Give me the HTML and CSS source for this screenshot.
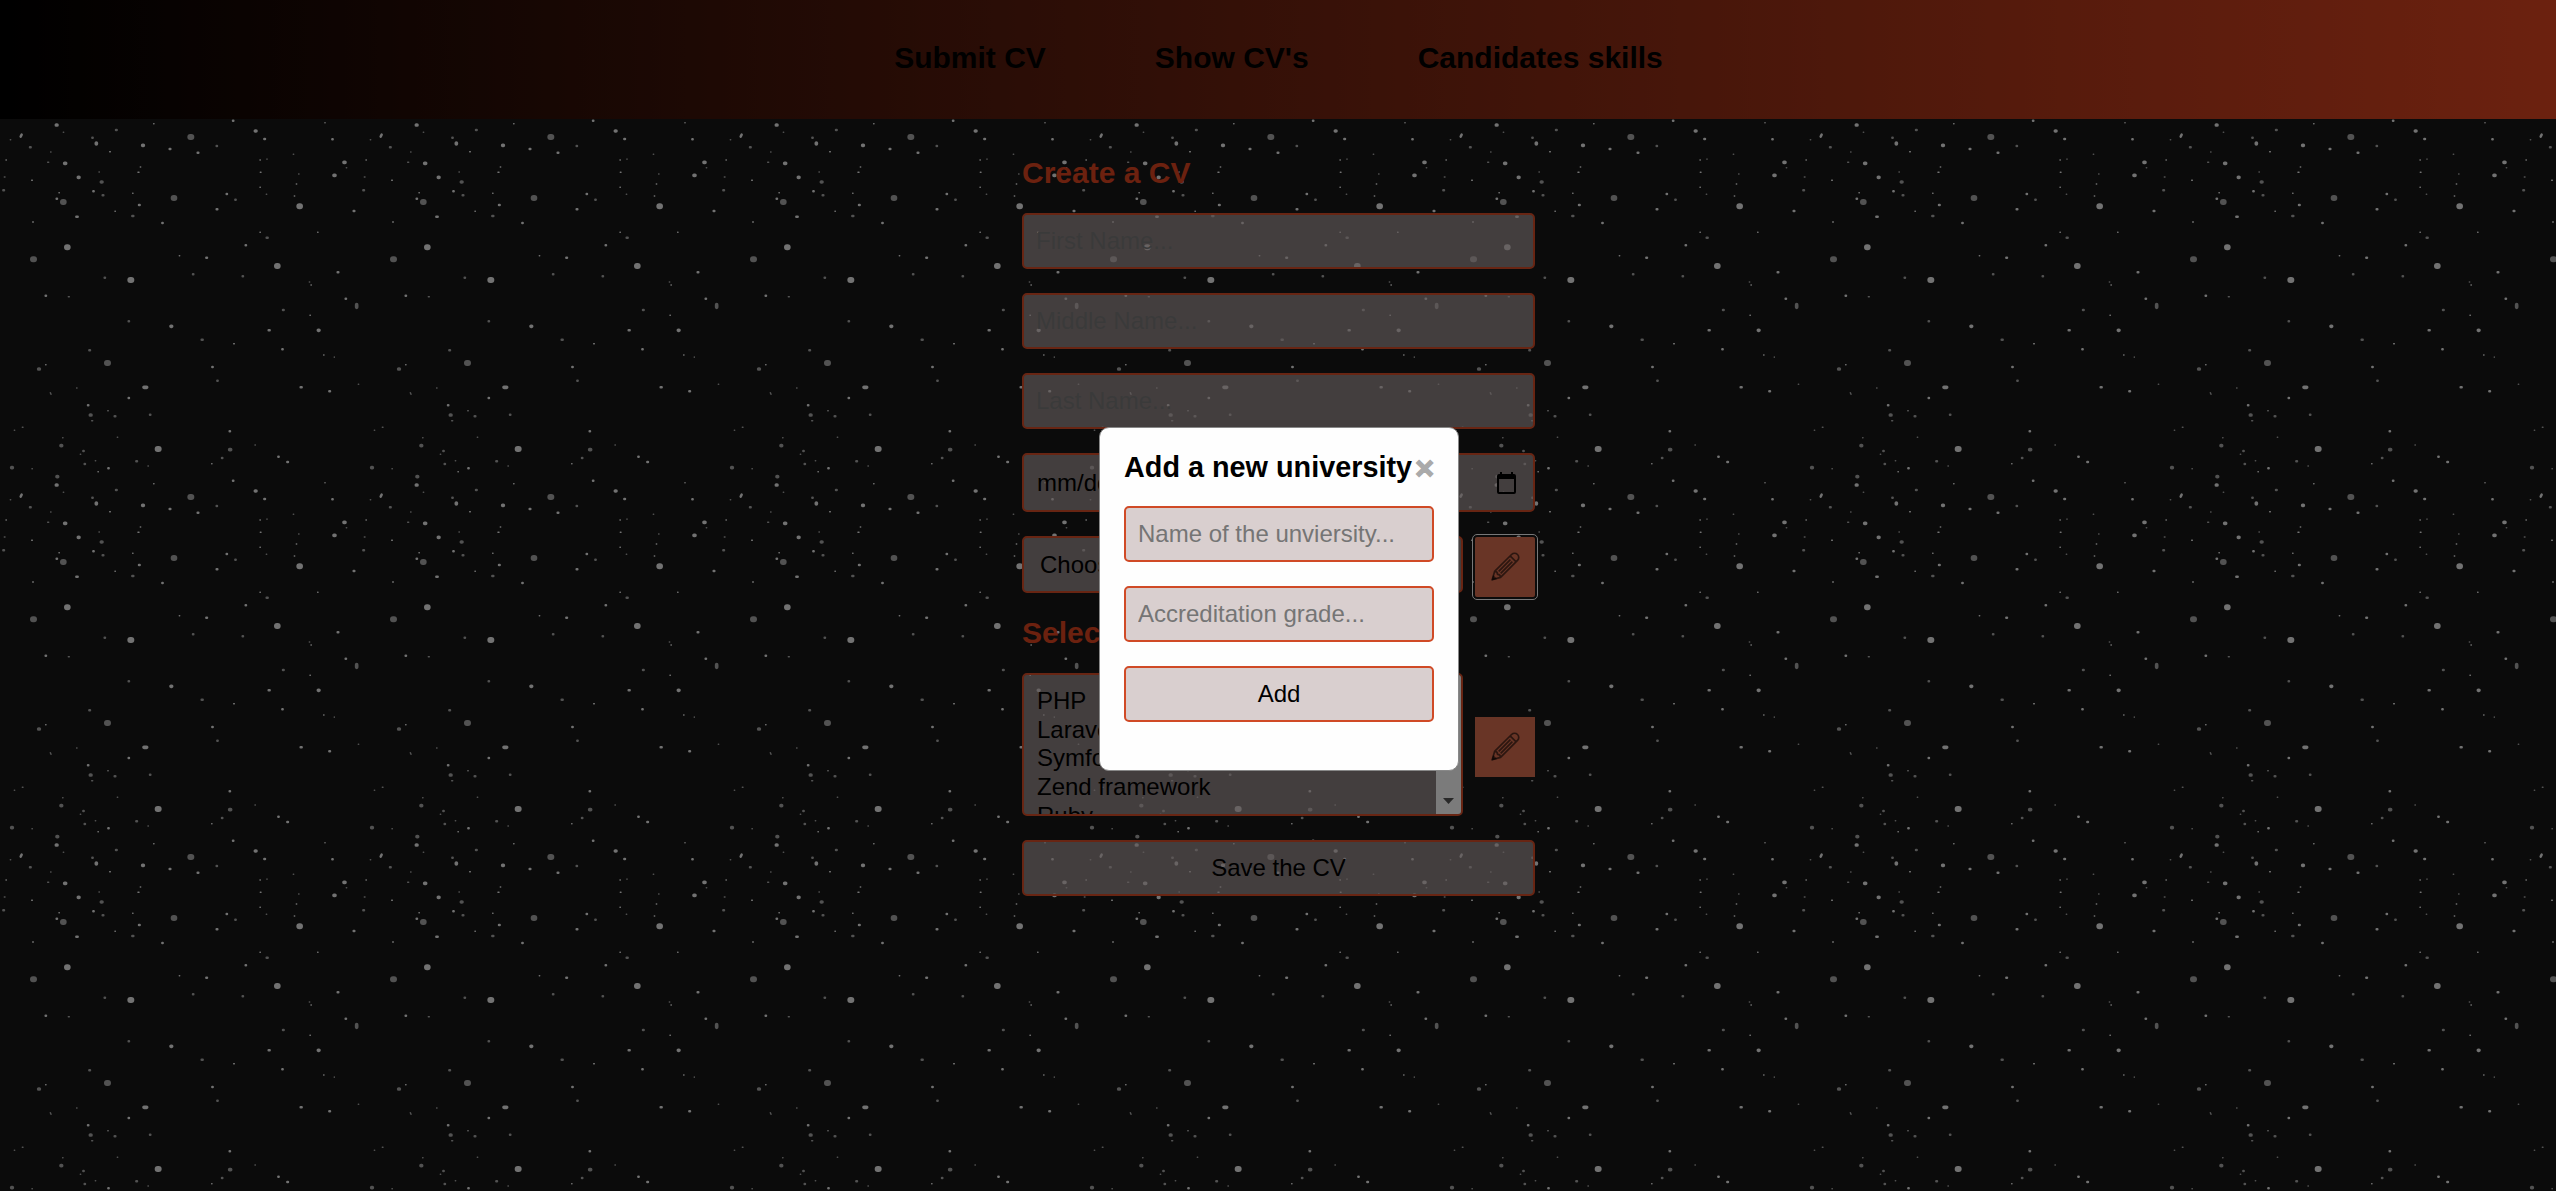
FILE: index.html
```html
<!DOCTYPE html>
<html lang="en">
<head>
<meta charset="utf-8">
<title>Create a CV</title>
<link rel="stylesheet" href="styles.css">
</head>
<body>
<svg class="sky" aria-hidden="true">
  <defs>
    <pattern id="stars" width="360" height="360" patternUnits="userSpaceOnUse">
      <g transform="scale(.33333)" fill="none" stroke-linecap="round">
        <path class="big bright" d="M898 619h2M201 742h2M391 840h3M831 798h2M473 267h3"/>
        <path class="big dim" d="M571 411h3M189 606h2M521 594h2M99 778h3M321 9h3"/>
        <path class="mid bright" d="M169 375h2M289 429v3M428 436h2M194 490h3M235 532h2M513 979h2M1032 487h3M1002 526h3M955 991h2M432 82h8M766 393h2"/>
        <path class="mid dim" d="M304 546h2M116 27h2M271 165h2M183 257h2M35 323h2M171 350h2M689 269h3M1070 914v8"/>
        <path class="small bright" d="M509 447h2M593 458h2M699 362h1M793 417h2M280 574h1M170 596h1M229 650h4M417 615h2M487 669h1M650 628h2M680 582h1M619 773h2M737 736h1M137 887h1M806 991h3M847 1048h1M637 21h1M997 418h1M1061 633h2M1013 817h2M1037 896h1M988 94h2M264 136h1M325 325h1M689 214h1M835 290h1M862 306h2M386 114h1M902 82h3M62 410l3 -6"/>
        <path class="small dim" d="M277 413h1M348 390h2M650 438h1M90 442h2M10 571h2M308 586h2M397 648h3M706 599h1M314 833h1M579 823h1M800 713h3M728 829h1M386 964h1M605 1019h3M849 930h2M268 1051h2M652 62h1M344 169h2M450 164h1M250 273h1M254 312h1M409 304h2M666 294h1"/>
        <path class="tiny bright" d="M461 371h1M780 480h1M781 517h2M780 562h1M889 552h1M883 588h1M18 480h1M329 455h2M95 541h2M177 578h1M345 634h1M398 580h1M421 501h1M414 517h3M98 666h2M538 767h1M780 697h1M701 1031h2M137 14h1M953 697h1M933 855h1M930 946h1M971 1065h1M294 335h1M635 311h1"/>
        <path class="tiny dim" d="M190 397h1M801 477v1M799 583h1M880 463h1M896 522h1M31 419h1M152 456h1M143 487h3M297 516h1M13 531h2M205 890h3M151 98l2 5M230 84h1M974 368h2M1039 503h1M928 846h1M1003 1071v1M1075 73h1M275 182h3M323 152h2M43 211h1M67 202h2M188 233h1M241 283h1M286 302h1M352 232h1M444 318h1M96 326h1M765 255h1"/>
      </g>
    </pattern>
    <symbol id="pencil" viewBox="-15 -15 30 30">
      <g transform="rotate(-45)">
        <path d="M-18-.1-10.5-4.2H13.500a4.200 4.200 0 0 1 0 8.400H-10.500ZM-10.500-4.200q2 2.100 0 4.200 2 2.100 0 4.200M11.500-4.200V4.200M-7.500-1.400H9M-7.500 1.400H9" fill="none" stroke="currentColor" stroke-width="1.7" stroke-linejoin="round"/>
        <path d="M-19 0-14-2.800V2.800Z" fill="currentColor"/>
      </g>
    </symbol>
  </defs>
  <rect width="100%" height="100%" fill="url(#stars)"/>
</svg>

<header class="nav">
  <a class="nav-link">Submit CV</a>
  <a class="nav-link">Show CV's</a>
  <a class="nav-link">Candidates skills</a>
</header>

<main class="form">
  <h2 class="title">Create a CV</h2>
  <input class="field" placeholder="First Name...">
  <input class="field" placeholder="Middle Name...">
  <input class="field" placeholder="Last Name...">
  <div class="field date">
    <span>mm/dd/yyyy</span>
    <svg class="calendar" viewBox="0 0 19 22"><path fill-rule="evenodd" d="M3 0h2v2h9V0h2v2h1a2 2 0 0 1 2 2v16a2 2 0 0 1-2 2H2a2 2 0 0 1-2-2V4a2 2 0 0 1 2-2h1ZM2 7v13h15V7Z"/></svg>
  </div>
  <div class="row">
    <div class="field select">Choose university</div>
    <button class="edit focused"><svg class="pencil"><use href="#pencil"/></svg></button>
  </div>
  <h2 class="title skills-title">Select skills</h2>
  <div class="row skills">
    <div class="list">
      <div class="options">
        <div>PHP</div><div>Laravel</div><div>Symfony</div><div>Zend framework</div><div>Ruby</div>
      </div>
      <div class="scrollbar"><svg class="arrow" viewBox="0 0 11 6"><path d="M0 0h11L5.5 6Z"/></svg></div>
    </div>
    <button class="edit"><svg class="pencil"><use href="#pencil"/></svg></button>
  </div>
  <button class="field submit">Save the CV</button>
</main>

<div class="overlay">
  <section class="modal">
    <div class="modal-head">
      <h2 class="modal-title">Add a new university</h2>
      <span class="close">×</span>
    </div>
    <input class="field" placeholder="Name of the unviersity...">
    <input class="field" placeholder="Accreditation grade...">
    <button class="field submit">Add</button>
  </section>
</div>
</body>
</html>
```
FILE: styles.css
```css
* { box-sizing: border-box; }

body {
  margin: 0;
  height: 1191px;
  overflow: hidden;
  background: #161616;
  color: #000;
  font-family: "Liberation Sans", Arial, sans-serif;
  font-size: 24px;
}

.sky {
  position: absolute;
  inset: 0;
  width: 100%;
  height: 100%;
  z-index: -1;
}

.bright { stroke: #e4e4e4; }
.dim { stroke: #a4a4a4; }
.big { stroke-width: 18px; }
.mid { stroke-width: 11px; }
.small { stroke-width: 7.5px; }
.tiny { stroke-width: 4.5px; }

.nav {
  display: flex;
  justify-content: center;
  align-items: center;
  gap: 109px;
  height: 119px;
  padding: 0 0 3px 1px;
  background: linear-gradient(to right, #000, #d8431f);
}

.nav-link { font-size: 30px; font-weight: bold; }

.form {
  width: 514px;
  margin: 0 auto;
  padding: 37px 0 0 1px;
}

.title {
  margin: 0 0 23px;
  font-size: 30px;
  line-height: 34px;
  color: #d8431f;
}

.field {
  display: block;
  width: 100%;
  height: 56px;
  margin: 0 0 24px;
  padding: 0 12px;
  border: 2px solid #d04a26;
  border-radius: 5px;
  background: rgba(197, 181, 181, .65);
  color: #000;
  font: 24px "Liberation Sans", Arial, sans-serif;
}

.field::placeholder { color: #757575; opacity: 1; }

.date {
  display: flex;
  justify-content: space-between;
  align-items: center;
  height: 59px;
  padding: 0 17px 0 13px;
}

.calendar { width: 19px; height: 22px; }

.row {
  display: flex;
  justify-content: space-between;
}

.select {
  width: 441px;
  height: 57px;
  margin: 0;
  padding: 0 16px;
  line-height: 54px;
}

.edit {
  display: flex;
  justify-content: center;
  align-items: center;
  width: 60px;
  height: 60px;
  margin: 1px 0 0;
  padding: 0;
  border: 0;
  background: #d26a4c;
}

.focused { outline: 1px solid #f0f0f0; outline-offset: 2px; border-radius: 2px; }

.pencil { width: 30px; height: 30px; color: rgba(0, 0, 0, .58); }

.skills-title { margin: 19px 0 23px; }

.skills { align-items: center; margin-bottom: 24px; }
.skills .edit { margin-top: 5px; }

.list {
  display: flex;
  width: 441px;
  height: 143px;
  overflow: hidden;
  border: 2px solid #d04a26;
  border-radius: 5px;
  background: rgba(197, 181, 181, .65);
}

.options {
  flex: 1;
  padding: 12px 13px 0;
  line-height: 28.7px;
}

.scrollbar {
  display: flex;
  justify-content: center;
  align-items: flex-end;
  width: 25px;
  padding-bottom: 10px;
  background: #f6f6f6;
}

.arrow { width: 11px; height: 6px; fill: #505050; }

.submit { padding: 0; text-align: center; }

.overlay {
  position: absolute;
  inset: 0;
  padding: 427px 0 0 2px;
  background: rgba(0, 0, 0, .5);
}

.modal {
  width: 360px;
  height: 344px;
  margin: 0 auto;
  padding: 23px 24px;
  border: 1px solid #888;
  border-radius: 10px;
  background: #fefefe;
}

.modal-head {
  display: flex;
  justify-content: space-between;
  height: 55px;
}

.modal-title {
  margin: -1px 0 0;
  font-size: 28.8px;
  line-height: 34px;
  white-space: nowrap;
}

.close {
  color: #aaa;
  font-size: 32px;
  font-weight: bold;
  line-height: 34px;
  -webkit-text-stroke: 1.5px #aaa;
}
```
